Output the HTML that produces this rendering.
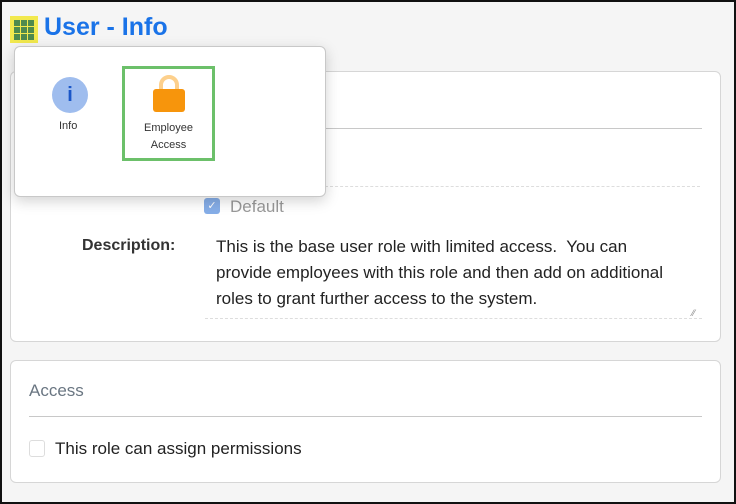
<!DOCTYPE html>
<html><head><meta charset="utf-8"><style>
*{box-sizing:border-box;margin:0;padding:0}
body{width:736px;height:504px;overflow:hidden;font-family:"Liberation Sans",sans-serif;}
.frame{position:absolute;left:0;top:0;width:736px;height:504px;border:2px solid #111;background:#f5f5f5}
.abs{position:absolute}
.card{position:absolute;background:#fff;border:1px solid #d6d6d6;border-radius:6px}
</style></head><body>
<div class="frame"></div>
<div class="abs" style="left:10px;top:16px;width:28px;height:27px;background:#f2e94e"></div>
<svg class="abs" style="left:14px;top:20px" width="20" height="20" viewBox="0 0 20 20">
<g fill="#4e8a4e">
<rect x="0" y="0" width="6" height="6"/><rect x="7" y="0" width="6" height="6"/><rect x="14" y="0" width="6" height="6"/>
<rect x="0" y="7" width="6" height="6"/><rect x="7" y="7" width="6" height="6"/><rect x="14" y="7" width="6" height="6"/>
<rect x="0" y="14" width="6" height="6"/><rect x="7" y="14" width="6" height="6"/><rect x="14" y="14" width="6" height="6"/>
</g></svg>
<div class="abs" style="left:44px;top:13px;font-size:25px;color:#1a73e8;font-weight:bold">User - Info</div>

<div class="card" style="left:10px;top:71px;width:711px;height:271px"></div>
<div class="abs" style="left:325px;top:128px;width:377px;height:1px;background:#c8c8c8"></div>
<div class="abs" style="left:325px;top:186px;width:375px;border-top:1px dashed #ddd"></div>
<div class="abs" style="left:204px;top:198px;width:16px;height:16px;background:#86aee8;border-radius:3px;color:#fff;font-size:11px;text-align:center;line-height:16px">✓</div>
<div class="abs" style="left:230px;top:197px;font-size:17px;color:#999">Default</div>
<div class="abs" style="left:82px;top:237px;font-size:16px;font-weight:bold;color:#333">Description:</div>
<div class="abs" style="left:216px;top:234px;width:468px;font-size:17px;line-height:26px;color:#222">This is the base user role with limited access.&nbsp; You can provide employees with this role and then add on additional roles to grant further access to the system.</div>
<div class="abs" style="left:205px;top:318px;width:497px;border-top:1px dashed #ddd"></div>
<div class="abs" style="left:692px;top:308px;font-size:9px;color:#888">⁄⁄</div>

<div class="card" style="left:10px;top:360px;width:711px;height:123px"></div>
<div class="abs" style="left:29px;top:381px;font-size:17px;color:#6a7682">Access</div>
<div class="abs" style="left:29px;top:416px;width:673px;height:1px;background:#c8c8c8"></div>
<div class="abs" style="left:29px;top:440px;width:16px;height:17px;border:1px solid #ddd;border-radius:3px;background:#fff"></div>
<div class="abs" style="left:55px;top:439px;font-size:17px;color:#222">This role can assign permissions</div>

<div class="abs" style="left:14px;top:46px;width:312px;height:151px;background:#fff;border:1px solid #c8c8c8;border-radius:6px;box-shadow:0 4px 14px rgba(0,0,0,0.18)"></div>
<div class="abs" style="left:52px;top:77px;width:36px;height:36px;border-radius:50%;background:#9fbdee;color:#1a56c8;font-weight:bold;font-size:20px;text-align:center;line-height:36px">i</div>
<div class="abs" style="left:59px;top:120px;font-size:11px;color:#333">Info</div>
<div class="abs" style="left:122px;top:66px;width:93px;height:95px;border:3px solid #6cc06a"></div>
<svg class="abs" style="left:151px;top:75px" width="36" height="38" viewBox="0 0 36 38">
<path d="M10 16V10a8 8 0 0 1 16 0v6" fill="none" stroke="#fdd08c" stroke-width="4"/>
<rect x="2" y="14" width="32" height="23" rx="3" fill="#f7950c"/>
</svg>
<div class="abs" style="left:125px;top:120px;width:87px;text-align:center;font-size:11px;line-height:17px;color:#333">Employee<br>Access</div>
</body></html>
